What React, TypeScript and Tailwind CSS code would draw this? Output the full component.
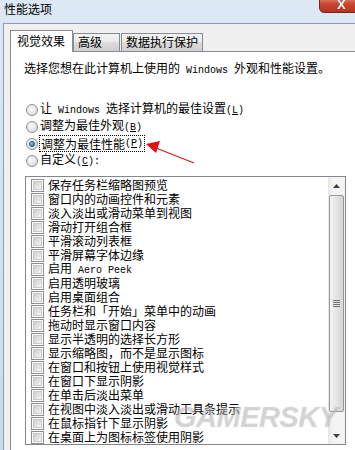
import type { ReactNode } from 'react'

const A = ({ children }: { children: ReactNode }) => (
  <span className="font-['Liberation_Mono',monospace] text-[10px]">{children}</span>
)

const Key = ({ k, colon }: { k: string; colon?: boolean }) => (
  <A>
    (<span className="underline">{k}</span>){colon ? ':' : ''}
  </A>
)

function Radio({ on }: { on?: boolean }) {
  return (
    <span className="w-[12px] h-[12px] rounded-full border border-[#8e8f8f] bg-[radial-gradient(circle_at_40%_40%,#fbfbfb,#d2d2d2)] flex items-center justify-center shrink-0">
      {on && (
        <span className="w-[6px] h-[6px] rounded-full bg-[radial-gradient(circle_at_35%_35%,#9ad6f7,#1a5a88)] border border-[#1d4d70]" />
      )}
    </span>
  )
}

function Check() {
  return (
    <span className="w-[13px] h-[13px] border border-[#8f8f8f] bg-white p-[1px] shrink-0">
      <span className="block w-full h-full border border-[#c8c8c8] bg-[linear-gradient(135deg,#cdcdcd,#f5f5f5)]" />
    </span>
  )
}

const items: ReactNode[] = [
  '保存任务栏缩略图预览',
  '窗口内的动画控件和元素',
  '淡入淡出或滑动菜单到视图',
  '滑动打开组合框',
  '平滑滚动列表框',
  '平滑屏幕字体边缘',
  <>
    启用<A> Aero Peek</A>
  </>,
  '启用透明玻璃',
  '启用桌面组合',
  '任务栏和「开始」菜单中的动画',
  '拖动时显示窗口内容',
  '显示半透明的选择长方形',
  '显示缩略图，而不是显示图标',
  '在窗口和按钮上使用视觉样式',
  '在窗口下显示阴影',
  '在单击后淡出菜单',
  '在视图中淡入淡出或滑动工具条提示',
  '在鼠标指针下显示阴影',
  '在桌面上为图标标签使用阴影',
]

export default function App() {
  return (
    <div className="w-[355px] h-[450px] overflow-hidden relative bg-[linear-gradient(180deg,#dde8f5,#c9daee)] text-black text-[12px] leading-[14px] font-['Noto_Sans_CJK_SC','Liberation_Sans',sans-serif]">
      {/* title bar */}
      <div className="h-[23px] pl-[4px] pt-[2px] relative">
        <span>性能选项</span>
        <div className="absolute left-[319px] top-[-6px] w-[43px] h-[19px] rounded-b-[5px] border border-[#6b2a20] bg-[linear-gradient(180deg,#e9a08e,#c9452f_55%,#b8331f)] flex items-end justify-start pl-[17px] pb-[1px]">
          <span className="text-white font-bold text-[13px] leading-[13px] font-['Liberation_Sans',sans-serif] [text-shadow:0_0_1px_#3a1410]">X</span>
        </div>
      </div>

      {/* client area */}
      <div className="ml-[3px] h-full border-l border-t border-[#8d9db4] bg-[#f0f0f0] pt-[6px]">
        {/* tabs */}
        <div className="flex items-end h-[21px] ml-[6px]">
          <div className="relative z-10 w-[63px] h-[22px] -mb-px bg-white border border-b-0 border-[#898c95] pl-[6px] pt-[3px]">
            视觉效果
          </div>
          <div className="w-[47px] h-[18px] bg-[linear-gradient(180deg,#f2f2f2,#ebebeb_45%,#dcdcdc_50%,#cfcfcf)] border border-b-0 border-[#898c95] pl-[4px] pt-[1px]">
            高级
          </div>
          <div className="ml-px w-[82px] h-[18px] bg-[linear-gradient(180deg,#f2f2f2,#ebebeb_45%,#dcdcdc_50%,#cfcfcf)] border border-b-0 border-[#898c95] pl-[4px] pt-[1px]">
            数据执行保护
          </div>
        </div>

        {/* panel */}
        <div className="ml-[6px] w-[360px] h-full bg-white border-l border-t border-[#898c95]">
          <div className="pt-[9px] pl-[13px]">
            选择您想在此计算机上使用的<A> Windows </A>外观和性能设置。
          </div>

          <div className="mt-[23px] pl-[15px] flex flex-col">
            <div className="h-[17px] flex items-center gap-[2px]">
              <Radio />
              <span>
                让<A> Windows </A>选择计算机的最佳设置<Key k="L" />
              </span>
            </div>
            <div className="h-[17px] flex items-center gap-[2px]">
              <Radio />
              <span>
                调整为最佳外观<Key k="B" />
              </span>
            </div>
            <div className="h-[17px] flex items-center gap-[1px]">
              <Radio on />
              <span className="h-[17px] flex items-center px-[1px] border border-dotted border-black">
                调整为最佳性能<Key k="P" />
              </span>
            </div>
            <div className="h-[17px] flex items-center gap-[2px]">
              <Radio />
              <span>
                自定义<Key k="C" colon />
              </span>
            </div>
          </div>

          {/* list box */}
          <div className="mt-[7px] ml-[14px] w-[321px] h-[269px] border border-[#828790] flex">
            <div className="flex-1 pt-px overflow-hidden">
              {items.map((label, i) => (
                <div key={i} className="h-[14px] flex items-center pl-[5px] gap-[4px] whitespace-nowrap">
                  <Check />
                  <span>{label}</span>
                </div>
              ))}
            </div>
            {/* scrollbar */}
            <div className="w-[17px] flex flex-col bg-[linear-gradient(90deg,#e6e6e6,#f4f4f4_30%,#f4f4f4)]">
              <div className="h-[17px] flex items-center justify-center">
                <svg width="7" height="4" viewBox="0 0 7 4">
                  <polygon points="3.5,0 7,4 0,4" fill="#404040" />
                </svg>
              </div>
              <div className="mt-px h-[217px] mx-[1px] rounded-[2px] border border-[#979797] bg-[linear-gradient(90deg,#f4f4f4,#e6e6e6_45%,#d4d4d4)] flex items-center justify-center">
                <div className="flex flex-col gap-[1px]">
                  <span className="block w-[7px] h-px bg-[#6f6f6f]" />
                  <span className="block w-[7px] h-px bg-[#6f6f6f]" />
                  <span className="block w-[7px] h-px bg-[#6f6f6f]" />
                  <span className="block w-[7px] h-px bg-[#6f6f6f]" />
                </div>
              </div>
              <div className="flex-1" />
              <div className="h-[17px] flex items-center justify-center">
                <svg width="7" height="4" viewBox="0 0 7 4">
                  <polygon points="0,0 7,0 3.5,4" fill="#404040" />
                </svg>
              </div>
            </div>
          </div>
        </div>
      </div>

      {/* red arrow annotation */}
      <svg className="absolute left-0 top-0 pointer-events-none" width="355" height="450">
        <line x1="156" y1="148" x2="194" y2="163" stroke="#d11a1a" strokeWidth="1.2" />
        <polygon points="146,144 160,141 156,153" fill="#e01010" />
      </svg>

      {/* watermark */}
      <div className="absolute left-[174px] top-[401px] pointer-events-none italic font-black text-[29px] leading-[32px] tracking-[-0.5px] font-['Liberation_Sans',sans-serif] text-[rgba(200,200,200,0.35)] [text-shadow:0_0_1px_rgba(150,150,150,0.35)]">
        GAMERSKY
      </div>
    </div>
  )
}
